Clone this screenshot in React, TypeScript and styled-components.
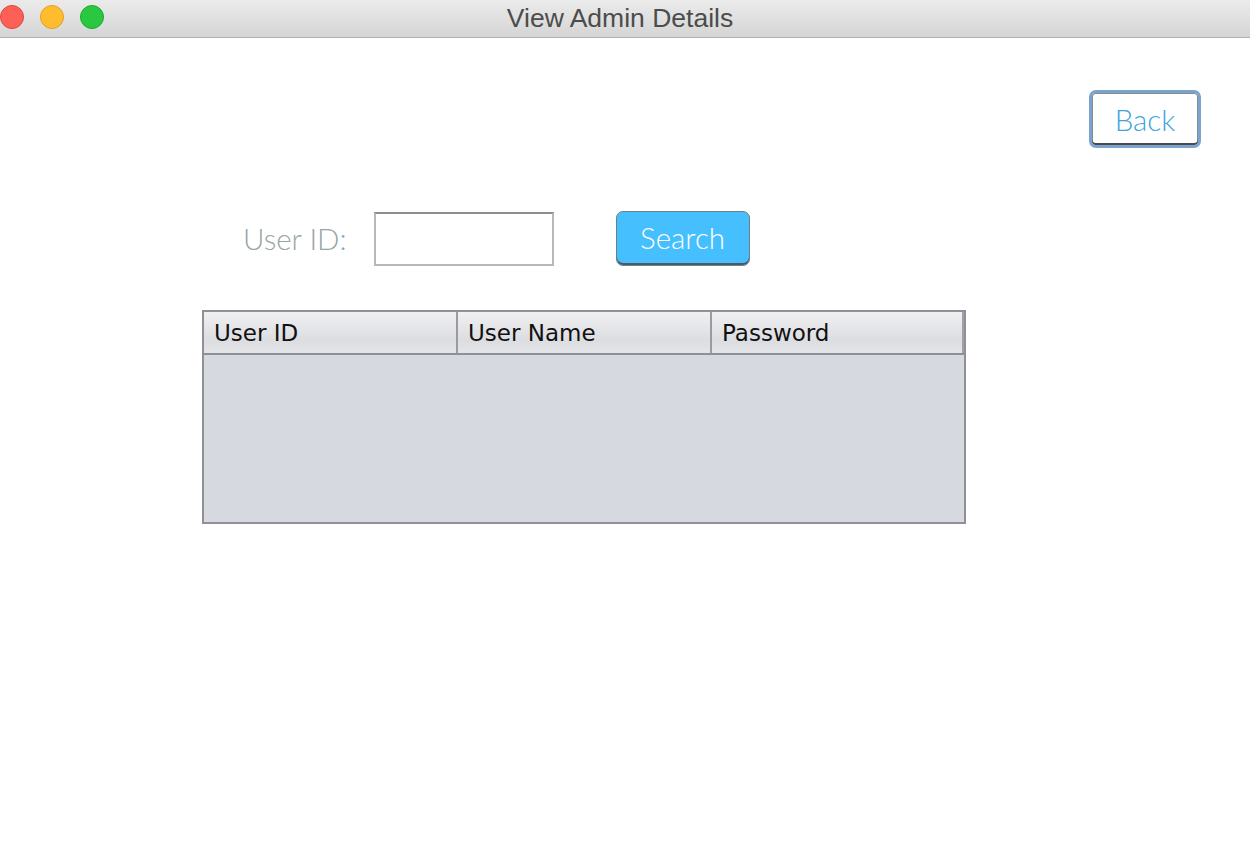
import React, { useState } from "react";
import styled, { createGlobalStyle } from "styled-components";

const GlobalStyle = createGlobalStyle`
  html, body {
    margin: 0;
    padding: 0;
    background: #ffffff;
  }
  body {
    font-family: "Lato", "Liberation Sans", sans-serif;
  }
`;

const Window = styled.div`
  width: 1250px;
  height: 854px;
  display: flex;
  flex-direction: column;
  background: #ffffff;
  overflow: hidden;
`;

const TitleBar = styled.header`
  position: relative;
  height: 37px;
  flex: 0 0 37px;
  display: flex;
  align-items: center;
  justify-content: center;
  padding-right: 10px;
  background: linear-gradient(#ebebeb, #d5d5d5);
  border-bottom: 1px solid #b1b1b1;
`;

const Lights = styled.div`
  position: absolute;
  left: 0;
  top: 5px;
  display: flex;
  gap: 16px;
`;

const Light = styled.span<{ $fill: string; $edge: string }>`
  width: 24px;
  height: 24px;
  border-radius: 50%;
  background: ${(p) => p.$fill};
  border: 1px solid ${(p) => p.$edge};
  box-sizing: border-box;
`;

const Title = styled.h1`
  margin: 0;
  font-family: "Liberation Sans", "DejaVu Sans", sans-serif;
  font-weight: 400;
  font-size: 26.5px;
  color: #4c4c4c;
`;

const Content = styled.main`
  flex: 1;
  display: flex;
  flex-direction: column;
  padding: 52px 49px 0 202px;
`;

const TopRow = styled.div`
  display: flex;
  justify-content: flex-end;
`;

const BackButton = styled.button`
  width: 112px;
  height: 58px;
  box-sizing: border-box;
  border-radius: 7px;
  background: #ffffff;
  border: 3px solid #7aa4cf;
  box-shadow: inset 0 -2px 0 #4a4a4a, inset 0 0 0 1px #8a8a8a;
  font-family: "Lato", sans-serif;
  font-weight: 300;
  font-size: 29.5px;
  color: #3fa3dc;
  padding: 0;
  cursor: pointer;
`;

const SearchRow = styled.div`
  display: flex;
  align-items: center;
  margin-top: 63px;
  padding-left: 41px;
`;

const Label = styled.label`
  font-family: "Lato", sans-serif;
  font-weight: 300;
  font-size: 29.5px;
  color: #98a5a6;
  margin-right: 27px;
`;

const Input = styled.input`
  width: 180px;
  height: 54px;
  box-sizing: border-box;
  border: 2px solid #b8b8b8;
  border-top-color: #8e8e8e;
  background: #ffffff;
  outline: none;
  font-size: 20px;
  margin-right: 62px;
`;

const SearchButton = styled.button`
  width: 134px;
  height: 55px;
  box-sizing: border-box;
  border-radius: 7px;
  background: #46bfff;
  border: 1px solid #6b7f8c;
  box-shadow: inset 0 -2px 0 #4e5a63;
  font-family: "Lato", sans-serif;
  font-weight: 300;
  font-size: 29.5px;
  color: #ffffff;
  padding: 0 0 2px;
  cursor: pointer;
`;

const Table = styled.div`
  margin-top: 44px;
  width: 764px;
  height: 214px;
  box-sizing: border-box;
  border: 2px solid #909096;
  background: #d7d9e1;
  display: flex;
  flex-direction: column;
`;

const HeaderRow = styled.div`
  display: grid;
  grid-template-columns: 254px 254px 252px;
  height: 41px;
  border-bottom: 2px solid #8f9096;
  background: linear-gradient(#f0f0f2, #dcdde1 70%, #e4e5e8);
`;

const HeaderCell = styled.div<{ $last?: boolean }>`
  display: flex;
  align-items: center;
  padding-left: 10px;
  font-family: "DejaVu Sans", "Liberation Sans", sans-serif;
  font-size: 23px;
  color: #111111;
  border-right: 2px solid ${(p) => (p.$last ? "#a0a0a6" : "#9a9aa0")};
`;

export default function App() {
  const [userId, setUserId] = useState<string>("");

  const handleChange = (e: React.ChangeEvent<HTMLInputElement>) => {
    setUserId(e.target.value);
  };

  return (
    <>
      <GlobalStyle />
      <Window>
        <TitleBar>
          <Lights>
            <Light $fill="#fe5f57" $edge="#e0443e" />
            <Light $fill="#febc2e" $edge="#dea123" />
            <Light $fill="#29c840" $edge="#1aab29" />
          </Lights>
          <Title>View Admin Details</Title>
        </TitleBar>
        <Content>
          <TopRow>
            <BackButton type="button">Back</BackButton>
          </TopRow>
          <SearchRow>
            <Label htmlFor="user-id">User ID:</Label>
            <Input id="user-id" value={userId} onChange={handleChange} />
            <SearchButton type="button">Search</SearchButton>
          </SearchRow>
          <Table>
            <HeaderRow>
              <HeaderCell>User ID</HeaderCell>
              <HeaderCell>User Name</HeaderCell>
              <HeaderCell $last>Password</HeaderCell>
            </HeaderRow>
          </Table>
        </Content>
      </Window>
    </>
  );
}
